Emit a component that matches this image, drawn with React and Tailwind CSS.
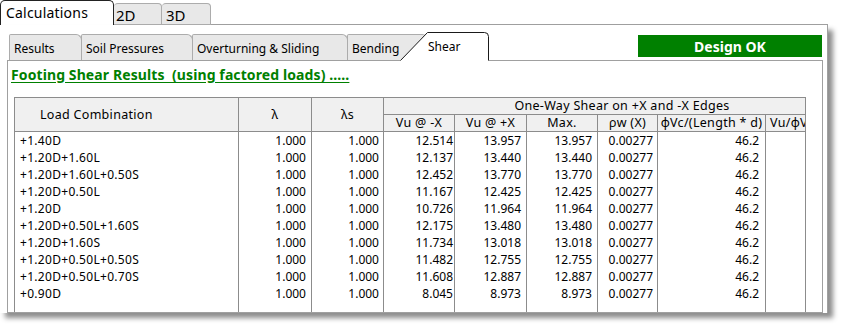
const rows = [
  ['+1.40D', '12.514', '13.957', '13.957'],
  ['+1.20D+1.60L', '12.137', '13.440', '13.440'],
  ['+1.20D+1.60L+0.50S', '12.452', '13.770', '13.770'],
  ['+1.20D+0.50L', '11.167', '12.425', '12.425'],
  ['+1.20D', '10.726', '11.964', '11.964'],
  ['+1.20D+0.50L+1.60S', '12.175', '13.480', '13.480'],
  ['+1.20D+1.60S', '11.734', '13.018', '13.018'],
  ['+1.20D+0.50L+0.50S', '11.482', '12.755', '12.755'],
  ['+1.20D+0.50L+0.70S', '11.608', '12.887', '12.887'],
  ['+0.90D', '8.045', '8.973', '8.973'],
];

const line = 'border-r border-[#8c8c8c]';
const head = `${line} border-b bg-[#f0f0f0] flex items-center justify-center text-[12.5px] tracking-[0.3px]`;
const num = `${line} text-right pr-[5px] leading-[17px]`;

function SubTab({ label, className }) {
  return (
    <div
      className={`mt-[2px] -mr-px h-[26px] shrink-0 rounded-tl-[2px] rounded-tr-[6px] border border-b-0 border-[#acacac] bg-[#e8e8e8] pl-[4px] pt-[1px] leading-[25px] ${className}`}
    >
      {label}
    </div>
  );
}

function ShearTab() {
  return (
    <div className="relative z-10 -ml-[27px] h-[29px] w-[90px] shrink-0">
      <svg className="absolute inset-0" width="90" height="29" viewBox="0 0 90 29">
        <path d="M0,29 L27.5,0.5 L84.5,0.5 Q88.5,0.5 88.5,4.5 L88.5,29 Z" fill="#fff" />
        <path d="M0.5,28.5 L27.5,0.5 L84.5,0.5 Q88.5,0.5 88.5,4.5 L88.5,28.5" fill="none" stroke="#1a1a1a" />
      </svg>
      <span className="relative block pl-[28px] pt-[5px] leading-[20px]">Shear</span>
    </div>
  );
}

export default function App() {
  return (
    <div className="h-[327px] w-[845px] overflow-hidden bg-white font-['Segoe_UI','Noto_Sans',sans-serif] text-[12px] text-black">
      <div className="flex w-[828px] flex-col">
        {/* top tabs */}
        <div className="flex h-[25px] items-end">
          <div className="h-[25px] w-[114px] shrink-0 rounded-t-[5px] border border-b-0 border-[#222] bg-white pl-[5px] text-[14px] leading-[24px] tracking-[0.2px]">
            Calculations
          </div>
          <div className="h-[22px] w-[48px] shrink-0 rounded-t-[4px] border border-l-0 border-[#acacac] bg-[#e8e8e8] pl-[2px] pt-[1px] text-[15px] leading-[21px]">
            2D
          </div>
          <div className="h-[22px] w-[49px] shrink-0 rounded-t-[4px] border border-l-0 border-[#acacac] bg-[#e8e8e8] pl-[4px] pt-[1px] text-[15px] leading-[21px]">
            3D
          </div>
          <div className="h-px flex-1 bg-[#a0a0a0]" />
        </div>

        {/* calculations body */}
        <div className="flex h-[288px] flex-col border-r border-[#a0a0a0] pl-[7px] pr-[4px] pt-[7px] shadow-[5px_5px_5px_rgba(0,0,0,0.45)]">
          <div className="flex h-[28px] items-start pl-[2px]">
            <SubTab label="Results" className="w-[73px]" />
            <SubTab label="Soil Pressures" className="w-[112px]" />
            <SubTab label="Overturning & Sliding" className="w-[156px]" />
            <SubTab label="Bending" className="w-[81px]" />
            <ShearTab />
            <div className="ml-auto mr-[1px] mt-[3px] flex h-[22px] w-[184px] items-center justify-center bg-[#008000] text-[14px] font-bold text-white">
              Design OK
            </div>
          </div>

          <div className="flex h-[253px] flex-col border border-[#a0a0a0]">
            <div className="h-[36px] pl-[3px] pt-[6px] text-[14px] font-bold leading-[16px] tracking-[0.1px] text-[#008000]">
              <span className="whitespace-pre underline underline-offset-2">Footing Shear Results  (using factored loads) .....</span>
            </div>

            <div className="ml-[6px] h-[215px] w-[792px] overflow-hidden border border-b-0 border-[#8c8c8c]">
              <div className="grid h-full w-[846px] grid-cols-[224px_73px_72px_71px_72px_71px_60px_108px_95px] grid-rows-[17px_17px_repeat(10,17px)_1fr] leading-[16px]">
                <div className={`${head} row-span-2 !justify-start pl-[25px]`}>Load Combination</div>
                <div className={`${head} row-span-2`}>λ</div>
                <div className={`${head} row-span-2`}>λs</div>
                <div className={`${head} col-span-6`}>One-Way Shear on +X and -X Edges</div>
                <div className={head}>Vu @ -X</div>
                <div className={head}>Vu @ +X</div>
                <div className={head}>Max.</div>
                <div className={head}>ρw (X)</div>
                <div className={head}>φVc/(Length * d)</div>
                <div className={`${head} !justify-start pl-[4px]`}>Vu/φVc</div>

                {rows.map((r) => (
                  <div key={r[0]} className="contents">
                    <div className={`${line} pl-[5px] leading-[17px] tracking-[0.3px]`}>{r[0]}</div>
                    <div className={num}>1.000</div>
                    <div className={`${num} !pr-[4px]`}>1.000</div>
                    <div className={`${num} !pr-[1px]`}>{r[1]}</div>
                    <div className={num}>{r[2]}</div>
                    <div className={num}>{r[3]}</div>
                    <div className={`${num} !pr-[4px]`}>0.00277</div>
                    <div className={`${num} !pr-[6px]`}>46.2</div>
                    <div className={line} />
                  </div>
                ))}

                <div className={line} />
                <div className={line} />
                <div className={line} />
                <div className={line} />
                <div className={line} />
                <div className={line} />
                <div className={line} />
                <div className={line} />
                <div className={line} />
              </div>
            </div>
          </div>
        </div>
      </div>
    </div>
  );
}
